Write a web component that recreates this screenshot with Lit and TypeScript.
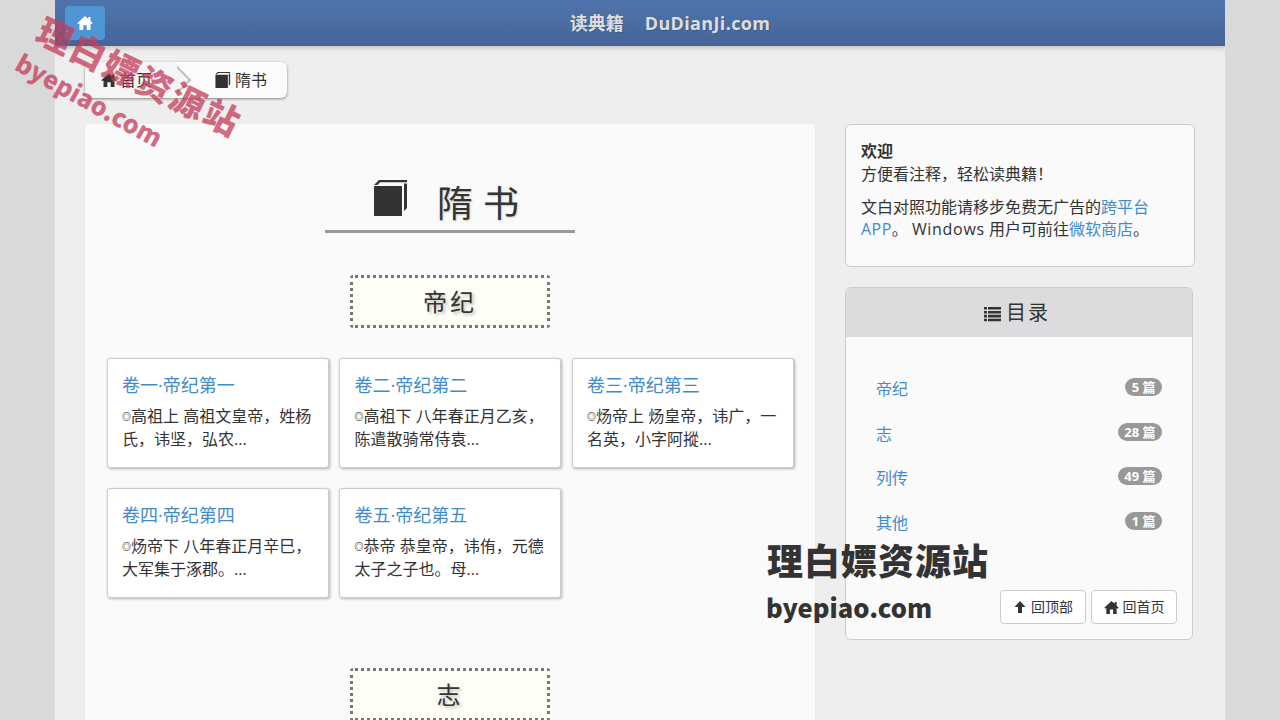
import { LitElement, html, css, svg } from "lit";
import { customElement } from "lit/decorators.js";

const home = (s: number) => html`<svg class="ic" width=${s} height=${s} viewBox="0 0 16 16"><path fill="currentColor" d="M8 1 L0.3 8.2 L1.4 9.2 L2.5 8.3 V15 H6.3 V10.2 H9.7 V15 H13.5 V8.3 L14.6 9.2 L15.7 8.2 L13.5 6.1 V2 H11.3 V4 Z"/></svg>`;
const book = (s: number) => html`<svg class="ic" width=${s} height=${s} viewBox="0 0 34 36"><path fill="currentColor" d="M0 6 H28 V36 H0 Z M0 5 L5 0 H33 V2.2 H6 L3.6 5 Z M30 3.4 H33 V28 L30 31 Z"/></svg>`;

const lst = svg`<path fill="currentColor" d="M0 1h3v2.6H0zM4 1h13v2.6H4zM0 4.9h3v2.6H0zM4 4.9h13v2.6H4zM0 8.8h3v2.6H0zM4 8.8h13v2.6H4zM0 12.7h3v2.6H0zM4 12.7h13v2.6H4z"/>`;

const cards = [
  ["卷一·帝纪第一", "高祖上 高祖文皇帝，姓杨氏，讳坚，弘农..."],
  ["卷二·帝纪第二", "高祖下 八年春正月乙亥，陈遣散骑常侍袁..."],
  ["卷三·帝纪第三", "炀帝上 炀皇帝，讳广，一名英，小字阿摐..."],
  ["卷四·帝纪第四", "炀帝下 八年春正月辛巳，大军集于涿郡。..."],
  ["卷五·帝纪第五", "恭帝 恭皇帝，讳侑，元德太子之子也。母..."],
];
const toc = [["帝纪", "5 篇"], ["志", "28 篇"], ["列传", "49 篇"], ["其他", "1 篇"]];

@customElement("app-root")
export class AppRoot extends LitElement {
  static styles = css`
    :host { display: block; height: 720px; overflow: hidden; background: #d9d9d9; position: relative;
      font-family: "Open Sans", "Liberation Sans", "Noto Sans CJK SC", sans-serif; font-size: 16px; color: #333; line-height: 22.8px; }
    * { box-sizing: border-box; }
    a { color: #428bca; text-decoration: none; }
    .ic { display: inline-block; vertical-align: -2px; }
    .lat { letter-spacing: .45px; }
    .win { letter-spacing: .7px; }
    .page { width: 1170px; height: 720px; margin-left: 55px; background: #eeeeee; overflow: hidden; }
    .nav { height: 46px; background: linear-gradient(#4f74ac, #466597); box-shadow: 0 2px 5px rgba(0,0,0,.2); position: relative;
      display: flex; justify-content: center; align-items: center; color: #dddddd; font-weight: 700; font-size: 18px; gap: 21px; padding-left: 60px; text-shadow: 1px 1px 1px rgba(0,0,0,.15); }
    .nav .dom { letter-spacing: .35px; }
    .homebtn { position: absolute; left: 10px; top: 6px; width: 40px; height: 34px; background: #4f94d3; border-radius: 4px; color: #fff;
      display: flex; align-items: center; justify-content: center; }
    .content { padding: 16px 30px 0; }
    .crumb { display: inline-flex; height: 36px; width: 202px; background: #fbfbfb; border-radius: 6px; box-shadow: 0 1px 3px rgba(0,0,0,.45); align-items: center; position: relative; }
    .crumb .a { width: 92px; height: 36px; padding-left: 16px; background: #f5f5f5; border-radius: 6px 0 0 6px; display:flex; align-items:center; gap: 3px; position: relative; z-index: 1; }
    .crumb .b { display:flex; align-items:center; gap: 4px; margin-left: 38px; }
    .chev { position: absolute; left: 75px; top: 5px; width: 26px; height: 26px; transform: rotate(45deg); background: #f5f5f5; border-top: 2px solid #c0c0c0; border-right: 2px solid #c0c0c0; }
    .grid { display: grid; grid-template-columns: 730px 350px; gap: 30px; margin-top: 26px; }
    .main { background: #fafafa; border-radius: 4px; padding: 50px 21.5px 0; height: 700px; }
    .h1 { width: 250px; margin: 0 auto; height: 59px; border-bottom: 3px solid #999; display: flex; justify-content: center; align-items: center; gap: 28px;
      font-size: 36px; letter-spacing: 10px; color: #333; text-shadow: 1px 1px 2px rgba(0,0,0,.2); }
    .h1 span { margin-top: 4px; }
    .h1 .ic { margin: -8px 0 0 2px; }
    .sec { width: 200px; height: 53px; margin: 42px auto 30px; border: 3px dotted #777; border-radius: 3px; background: #fffef6; display:flex; align-items:center; justify-content:center;
      font-size: 24px; letter-spacing: 3px; padding-top: 1px; text-shadow: 2px 2px 3px rgba(0,0,0,.25); }
    .sec.second { margin-top: 70px; }
    .cards { display: grid; grid-template-columns: 222px 222px 222px; column-gap: 10.5px; row-gap: 20px; }
    .card { height: 110px; background: #fff; border: 1px solid #ccc; border-radius: 3px; box-shadow: 1px 1px 3px rgba(0,0,0,.3); padding: 14px 14.5px 0; }
    .card .t { font-size: 18px; line-height: 24px; color: #428bca; display: block; }
    .card p { margin: 8px 0 0; font-size: 16px; line-height: 23px; color: #333; }
    .card p i { display: inline-block; width: 9px; font-style: normal; font-size: 9px; line-height: 10px; font-family: "Noto Sans CJK SC", sans-serif; font-weight: 700; color: #222; vertical-align: 2px; }
    .side { display: flex; flex-direction: column; gap: 20px; }
    .well { height: 143px; background: #fafafa; border: 1px solid #ccc; border-radius: 6px; padding: 15px; }
    .well p { margin: 0 0 10px; }
    .panel { width: 348px; height: 353px; background: #fafafa; border: 1px solid #ccc; border-radius: 6px; position: relative; overflow: hidden; }
    .phead { height: 49px; background: #dcdcde; display:flex; align-items:center; justify-content:center; gap: 5px; padding: 2px 4px 0 0; font-size: 20px; letter-spacing: 2px; color:#333; }
    .toc { margin: 40px 30px 0; }
    .toc div { height: 44.5px; display:flex; justify-content: space-between; }
    .toc a { padding-top: 1px; }
    .badge { background: #999; color: #fff; font-size: 13px; font-weight: 700; border-radius: 10px; height: 18px; line-height: 18px; padding: 0 6.5px; margin-top: 1px; }
    .btns { position: absolute; right: 15px; bottom: 15px; display:flex; gap: 5px; }
    .btn { width: 86px; height: 34px; background:#fff; border: 1px solid #ccc; border-radius: 4px; display:flex; align-items:center; justify-content:center; gap: 4px; font-size: 14px; }
    .wm { position: absolute; z-index: 10; font-family: "Noto Sans CJK SC", sans-serif; font-weight: 900; white-space: nowrap; }
    .wm.dark { color: #333; }
    .wm.red { color: rgba(196,60,90,.75); transform-origin: left top; }
    .wm1 { left: 45px; top: 17px; font-size: 35px; letter-spacing: 2px; transform: rotate(26deg); }
    .wm2 { left: 24px; top: 50px; font-size: 25px; letter-spacing: 0; transform: rotate(29deg); }
    .wm3 { left: 767px; top: 535px; font-size: 36px; letter-spacing: 1px; line-height: 48px; }
    .wm4 { left: 766px; top: 589px; font-size: 25.5px; line-height: 36px; letter-spacing: 0; }
  `;
  render() {
    return html`
      <div class="page">
        <div class="nav">
          <a class="homebtn">${home(16)}</a>
          <span>读典籍</span><span class="dom">DuDianJi.com</span>
        </div>
        <div class="content">
          <div class="crumb">
            <span class="a">${home(16)}首页</span><span class="chev"></span>
            <span class="b">${book(16)}隋书</span>
          </div>
          <div class="grid">
            <div class="main">
              <div class="h1">${book(36)}<span>隋书</span></div>
              <div class="sec">帝纪</div>
              <div class="cards">
                ${cards.map(([t, d]) => html`<div class="card"><a class="t">${t}</a><p><i>◎</i>${d}</p></div>`)}
              </div>
              <div class="sec second">志</div>
            </div>
            <div class="side">
              <div class="well">
                <p><b>欢迎</b><br />方便看注释，轻松读典籍！</p>
                <p>文白对照功能请移步免费无广告的<a>跨平台<span class="lat">APP</span></a>。 <span class="win">Windows</span> 用户可前往<a>微软商店</a>。</p>
              </div>
              <div class="panel">
                <div class="phead"><svg class="ic" width="17" height="16" viewBox="0 0 17 16">${lst}</svg><span>目录</span></div>
                <div class="toc">
                  ${toc.map(([n, c]) => html`<div><a>${n}</a><span class="badge">${c}</span></div>`)}
                </div>
                <div class="btns">
                  <span class="btn"><svg class="ic" width="14" height="14" viewBox="0 0 14 14"><path fill="currentColor" d="M7 1 L12.5 7 H9 V13 H5 V7 H1.5 Z"/></svg>回顶部</span>
                  <span class="btn">${home(15)}回首页</span>
                </div>
              </div>
            </div>
          </div>
        </div>
      </div>
      <div class="wm red wm1">理白嫖资源站</div>
      <div class="wm red wm2">byepiao.com</div>
      <div class="wm dark wm3">理白嫖资源站</div>
      <div class="wm dark wm4">byepiao.com</div>
    `;
  }
}
